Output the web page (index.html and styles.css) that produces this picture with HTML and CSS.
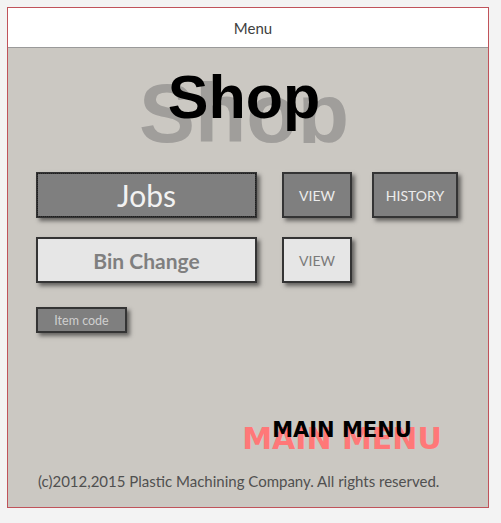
FILE: index.html
```html
<!DOCTYPE html>
<html>
<head>
<meta charset="utf-8">
<link rel="stylesheet" href="styles.css">
</head>
<body>
<div class="frame">
  <div class="header">Menu</div>
  <div class="content">
    <div class="title">
      <span class="title-shadow">Shop</span>
      <span class="title-main">Shop</span>
    </div>
    <div class="row row-first">
      <div class="btn btn-dark btn-wide btn-focus"><span class="big">Jobs</span></div>
      <div class="btn btn-dark btn-small">VIEW</div>
      <div class="btn btn-dark btn-history">HISTORY</div>
    </div>
    <div class="row row-second">
      <div class="btn btn-light btn-wide"><span class="bold">Bin Change</span></div>
      <div class="btn btn-light btn-small">VIEW</div>
    </div>
    <div class="row row-third">
      <div class="btn btn-dark btn-item">Item code</div>
    </div>
    <div class="mainmenu">
      <span class="mm-shadow">MAIN MENU</span>
      <span class="mm-main">MAIN MENU</span>
    </div>
    <div class="footer">(c)2012,2015 Plastic Machining Company. All rights reserved.</div>
  </div>
</div>
</body>
</html>
```
FILE: styles.css
```css
html, body {
  margin: 0;
  padding: 0;
  background: #f3f3f3;
}
body {
  padding: 7px 0 0 7px;
}
.frame {
  width: 480px;
  height: 499px;
  border: 1px solid #c0535a;
  background: #cbc8c2;
  display: flex;
  flex-direction: column;
}
.header {
  height: 39px;
  background: #ffffff;
  border-bottom: 1px solid #9a9a9a;
  font-family: Lato, "Open Sans", sans-serif;
  font-size: 15px;
  color: #404040;
  display: flex;
  align-items: center;
  justify-content: center;
  padding-left: 10px;
}
.content {
  flex: 1;
  display: flex;
  flex-direction: column;
}
.title {
  height: 95px;
  overflow: hidden;
  display: grid;
  justify-items: center;
  align-items: start;
  padding-right: 8px;
  font-family: "Liberation Sans", Arial, sans-serif;
  font-weight: bold;
  line-height: 1;
}
.title-shadow, .title-main {
  grid-area: 1 / 1;
}
.title-shadow {
  font-size: 84px;
  color: #a09e9b;
  margin-top: 23px;
}
.title-main {
  font-size: 61px;
  color: #000;
  margin-top: 19px;
}
.row {
  display: flex;
  padding-left: 28px;
}
.row-first {
  margin-top: 29px;
}
.row-second {
  margin-top: 19px;
}
.row-third {
  margin-top: 24px;
}
.btn {
  box-sizing: border-box;
  height: 46px;
  border: 2px solid #343434;
  box-shadow: 3px 3px 4px rgba(0, 0, 0, 0.5);
  display: flex;
  align-items: center;
  justify-content: center;
  font-family: Lato, "Open Sans", sans-serif;
  font-size: 14px;
  margin-right: 25px;
}
.btn-dark {
  background: #7f7f7f;
  color: #ececec;
}
.btn-light {
  background: #e6e6e6;
  color: #7a7a7a;
}
.btn-wide {
  width: 221px;
}
.btn-small {
  width: 70px;
  margin-right: 20px;
}
.btn-history {
  width: 86px;
}
.btn-focus {
  outline: 1px dotted #1e1e1e;
  outline-offset: -2px;
}
.big {
  font-size: 30px;
  color: #f2f2f2;
}
.bold {
  font-size: 21px;
  font-weight: bold;
  color: #7f7f7f;
}
.btn-item {
  width: 91px;
  height: 26px;
  font-size: 12.5px;
  color: #cfcfcf;
}
.mainmenu {
  display: grid;
  justify-items: center;
  align-items: start;
  width: 220px;
  margin-left: 224px;
  margin-top: 87px;
  font-family: "DejaVu Sans", Verdana, sans-serif;
  font-weight: bold;
  line-height: 1;
}
.mm-shadow, .mm-main {
  grid-area: 1 / 1;
}
.mm-shadow {
  font-size: 30px;
  color: #ff7878;
  margin-top: 4px;
}
.mm-main {
  font-size: 21px;
  color: #000;
}
.footer {
  margin-top: 20px;
  padding-left: 30px;
  font-family: Lato, "Open Sans", sans-serif;
  font-size: 15px;
  color: #505050;
  line-height: 1;
}
```
